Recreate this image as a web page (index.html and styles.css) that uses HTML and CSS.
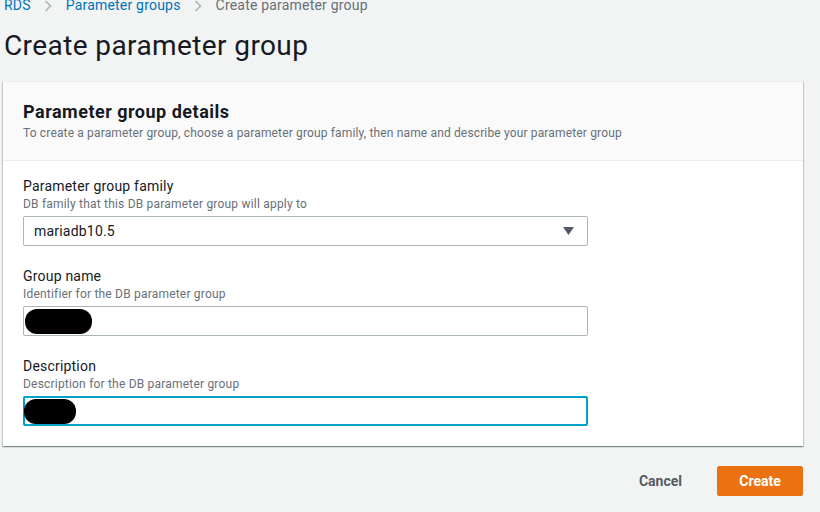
FILE: index.html
```html
<!DOCTYPE html>
<html lang="en">
<head>
<meta charset="utf-8">
<title>Create parameter group</title>
<link rel="stylesheet" href="styles.css">
</head>
<body>
<div class="page">
  <nav class="crumbs">
    <a class="crumb-link">RDS</a>
    <svg class="chev" width="8" height="12" viewBox="0 0 8 12"><path d="M1.5 1 L6.5 6 L1.5 11" fill="none" stroke="#aab7b8" stroke-width="1.6"/></svg>
    <a class="crumb-link">Parameter groups</a>
    <svg class="chev" width="8" height="12" viewBox="0 0 8 12"><path d="M1.5 1 L6.5 6 L1.5 11" fill="none" stroke="#aab7b8" stroke-width="1.6"/></svg>
    <span class="crumb-current">Create parameter group</span>
  </nav>
  <h1 class="title">Create parameter group</h1>
  <section class="card">
    <header class="card-head">
      <h2 class="card-title">Parameter group details</h2>
      <p class="card-desc">To create a parameter group, choose a parameter group family, then name and describe your parameter group</p>
    </header>
    <div class="card-body">
      <div class="field">
        <div class="label">Parameter group family</div>
        <div class="hint">DB family that this DB parameter group will apply to</div>
        <div class="control select">
          <span class="value">mariadb10.5</span>
          <svg class="caret" width="11" height="8" viewBox="0 0 11 8"><path d="M0 0 H11 L5.5 8 Z" fill="#545b64"/></svg>
        </div>
      </div>
      <div class="field">
        <div class="label">Group name</div>
        <div class="hint">Identifier for the DB parameter group</div>
        <div class="control">
          <span class="redact redact-name"></span>
        </div>
      </div>
      <div class="field">
        <div class="label">Description</div>
        <div class="hint">Description for the DB parameter group</div>
        <div class="control focused">
          <span class="redact redact-desc"></span>
        </div>
      </div>
    </div>
  </section>
  <div class="actions">
    <button class="btn-link">Cancel</button>
    <button class="btn-primary">Create</button>
  </div>
</div>
</body>
</html>
```
FILE: styles.css
```css
* { box-sizing: border-box; }
html, body { margin: 0; padding: 0; }
body {
  background: #f2f3f3;
  font-family: Roboto, "Liberation Sans", sans-serif;
  color: #16191f;
  width: 820px;
  height: 512px;
  overflow: hidden;
}
.page {
  padding: 0 17px 0 3px;
}
.crumbs {
  display: flex;
  align-items: center;
  height: 17px;
  margin-top: -3px;
  padding-left: 1px;
  font-size: 14px;
  line-height: 17px;
  letter-spacing: 0.2px;
}
.crumb-link { color: #0073bb; }
.crumb-current { color: #687078; }
.chev { margin: 0 14px 0 13px; }
.title {
  margin: 14px 0 0 1px;
  font-size: 28px;
  line-height: 36px;
  font-weight: 400;
  letter-spacing: 0.4px;
  color: #16191f;
}
.card {
  margin-top: 17px;
  background: #ffffff;
  border-top: 1px solid #eaeded;
  box-shadow: 0 1px 1px 0 rgba(0,28,36,.3), 1px 1px 1px 0 rgba(0,28,36,.15), -1px 1px 1px 0 rgba(0,28,36,.15);
}
.card-head {
  background: #fafafa;
  border-bottom: 1px solid #eaeded;
  padding: 19px 20px 19px 20px;
}
.card-title {
  margin: 0;
  font-size: 18px;
  line-height: 22px;
  font-weight: 700;
  letter-spacing: 0.5px;
  color: #16191f;
}
.card-desc {
  margin: 2px 0 0 0;
  font-size: 12px;
  line-height: 16px;
  letter-spacing: 0.15px;
  color: #687078;
}
.card-body {
  padding: 15px 20px 20px 20px;
  display: flex;
  flex-direction: column;
  gap: 20px;
}
.field {
  display: flex;
  flex-direction: column;
  width: 565px;
}
.label {
  font-size: 14px;
  line-height: 20px;
  letter-spacing: 0.2px;
  color: #16191f;
}
.hint {
  font-size: 12px;
  line-height: 16px;
  letter-spacing: 0.2px;
  color: #687078;
}
.control {
  position: relative;
  margin-top: 4px;
  height: 30px;
  background: #ffffff;
  border: 1px solid #aab7b8;
  border-radius: 2px;
  display: flex;
  align-items: center;
  padding: 0 10px;
  font-size: 14px;
  letter-spacing: 0.2px;
}
.select { justify-content: space-between; padding-right: 13px; }
.value { color: #16191f; }
.focused {
  border: 2px solid #00a1c9;
}
.redact {
  position: absolute;
  background: #000000;
  border-radius: 12px;
}
.redact-name { left: 1px; top: 2px; width: 67px; height: 25px; }
.redact-desc { left: -1px; top: 1px; width: 52px; height: 25px; }
.actions {
  display: flex;
  justify-content: flex-end;
  align-items: center;
  margin-top: 20px;
}
.btn-link {
  background: none;
  border: none;
  font-family: inherit;
  font-size: 14px;
  font-weight: 700;
  color: #545b64;
  padding: 0;
  margin-right: 35px;
}
.btn-primary {
  background: #ec7211;
  border: 1px solid #ec7211;
  border-radius: 2px;
  color: #ffffff;
  font-family: inherit;
  font-size: 14px;
  font-weight: 700;
  width: 86px;
  height: 30px;
  padding: 0;
}
```
